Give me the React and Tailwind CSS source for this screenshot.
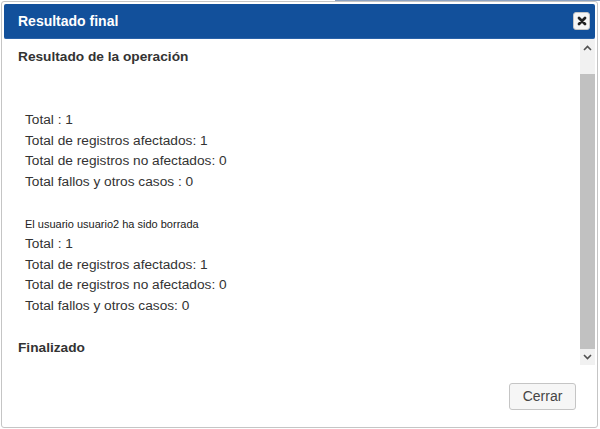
import React from "react";

function Line({ children }) {
  return <div className="leading-[20.5px] text-[13.7px] text-[#333]">{children}</div>;
}

export default function App() {
  return (
    <div className="w-[600px] h-[429px] bg-white overflow-hidden relative" style={{ fontFamily: '"Liberation Sans", Arial, sans-serif' }}>
      <div className="absolute top-0 left-[335px] w-[265px] h-[1px] bg-[#8fa3c0]" />
      <div className="ml-[1px] mt-[1px] w-[597px] h-[427px] border border-[#c5c5c5] rounded-[3px] p-[2px] flex flex-col bg-white">
        <div className="h-[35px] bg-[#12509b] rounded-[2px] flex items-center justify-between pl-[14px] pr-[5px] border-b border-[#2a62a8]">
          <span className="text-white font-bold text-[14px]">Resultado final</span>
          <button className="w-[17px] h-[18px] bg-[#f6f6f6] border border-[#c5c5c5] rounded-[3px] flex items-center justify-center">
            <svg width="10" height="10" viewBox="0 0 10 10">
              <path d="M2 2 L8 8 M8 2 L2 8" stroke="#222" strokeWidth="2.8" strokeLinecap="round" />
            </svg>
          </button>
        </div>
        <div className="flex h-[326px]">
          <div className="flex-1 pl-[14px] pt-[8px]">
            <div className="font-bold text-[13.7px] leading-[20px] text-[#333]">Resultado de la operación</div>
            <div className="pl-[7px] mt-[43px]">
              <Line>Total : 1</Line>
              <Line>Total de registros afectados: 1</Line>
              <Line>Total de registros no afectados: 0</Line>
              <Line>Total fallos y otros casos : 0</Line>
              <div className="mt-[22px] text-[11px] leading-[20px] text-[#222]">El usuario usuario2 ha sido borrada</div>
              <Line>Total : 1</Line>
              <Line>Total de registros afectados: 1</Line>
              <Line>Total de registros no afectados: 0</Line>
              <Line>Total fallos y otros casos: 0</Line>
            </div>
            <div className="font-bold text-[13.7px] leading-[20px] text-[#333] mt-[22px]">Finalizado</div>
          </div>
          <div className="w-[15px] bg-[#f1f1f1] flex flex-col items-center">
            <div className="h-[16px] flex items-center justify-center mt-[1px]">
              <svg width="9" height="6" viewBox="0 0 9 6">
                <path d="M1 5 L4.5 1.5 L8 5" stroke="#505050" strokeWidth="1.6" fill="none" />
              </svg>
            </div>
            <div className="mt-[18px] w-[15px] h-[275px] bg-[#c1c1c1]" />
            <div className="h-[16px] flex items-center justify-center">
              <svg width="9" height="6" viewBox="0 0 9 6">
                <path d="M1 1 L4.5 4.5 L8 1" stroke="#505050" strokeWidth="1.6" fill="none" />
              </svg>
            </div>
          </div>
        </div>
        <div className="flex-1 flex justify-end items-start pt-[18px] pr-[19px]">
          <button className="w-[67px] h-[27px] bg-[#f6f6f6] border border-[#c5c5c5] rounded-[3px] text-[14px] text-[#454545]">
            Cerrar
          </button>
        </div>
      </div>
    </div>
  );
}
